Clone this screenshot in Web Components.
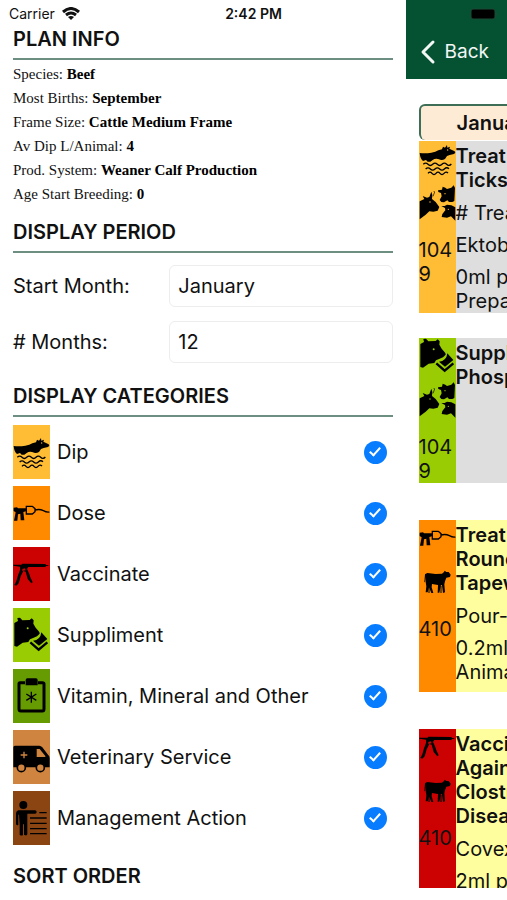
<!DOCTYPE html>
<html lang="en">
<head>
<meta charset="utf-8">
<meta name="viewport" content="width=device-width, initial-scale=1">
<title>Herd plan</title>
<style>
    html, body {
        height: 100%;
        margin: 0; }
    body {
        background: #fff;
        color: #111;
        font-family: Inter, "Liberation Sans", sans-serif;
        font-size: 20px;
        line-height: 24px; }
</style>
</head>
<body>

<template id="app-template">
    <style>
        :host {
            display: block;
            position: relative;
            height: 100%;
            overflow: hidden; }
        .panes {
            display: grid;
            grid-template-columns: 4fr 1fr;
            box-sizing: border-box;
            height: 100%;
            padding-bottom: 12px; }
        .pane {
            min-width: 0;
            min-height: 0;
            overflow: hidden; }
        .drawer {
            padding: 27px 13px 0; }
    </style>
    <div class="panes">
        <div class="pane drawer"><slot name="drawer"></slot></div>
        <div class="pane"><slot name="screen"></slot></div>
    </div>
    <slot name="status"></slot>
</template>

<template id="status-template">
    <style>
        :host {
            position: absolute;
            top: 0;
            left: 0;
            right: 0;
            display: grid;
            grid-template-columns: 1fr auto 1fr;
            align-items: center;
            height: 27px;
            padding: 0 9px;
            font-size: 14px;
            line-height: 27px; }
        .carrier {
            display: flex;
            align-items: center;
            gap: 7px; }
        .time {
            font-weight: 600; }
        .battery {
            justify-self: end; }
        svg {
            display: block; }
    </style>
    <div class="carrier">
        <slot name="carrier"></slot>
        <svg width="18" height="14" viewBox="0 0 18 14" fill="none" stroke="#111" stroke-width="3">
            <path d="M1 5Q9-2 17 5M4 8Q9 4 14 8"/>
            <path d="M6 10Q9 8 12 10L9 13Z" fill="#111" stroke="none"/>
        </svg>
    </div>
    <div class="time"><slot name="time"></slot></div>
    <svg class="battery" width="28" height="12" viewBox="0 0 28 12">
        <rect x="1" y="1" width="24" height="10" rx="2" fill="#000" stroke="#1b4a34"/>
        <path d="M26 4v4q2-2 0-4" fill="#1b4a34"/>
    </svg>
</template>

<template id="section-template">
    <style>
        :host {
            display: block;
            margin-bottom: 19px; }
        :host([dense]) {
            margin-bottom: 14px; }
        h2 {
            margin: 0 0 8px;
            padding-bottom: 7px;
            border-bottom: 2px solid #6d8f81;
            font-size: 20px;
            line-height: 24px;
            font-weight: 600; }
        :host([dense]) h2 {
            margin-bottom: 2px; }
    </style>
    <h2></h2>
    <slot></slot>
</template>

<template id="info-template">
    <style>
        :host {
            display: block;
            font-family: "Liberation Serif", serif;
            font-size: 15px;
            line-height: 24px; }
        b {
            color: #000; }
    </style>
    <span></span> <b><slot></slot></b>
</template>

<template id="field-template">
    <style>
        :host {
            display: grid;
            grid-template-columns: 7fr 10fr;
            align-items: center;
            margin: 12px 0 10px;
            padding-bottom: 2px; }
        input {
            box-sizing: border-box;
            width: 100%;
            height: 42px;
            padding: 0 8px;
            border: 1px solid #ededed;
            border-radius: 6px;
            background: #fff;
            color: inherit;
            font: inherit; }
    </style>
    <label for="value"></label>
    <input id="value" type="text">
</template>

<template id="category-template">
    <style>
        :host {
            display: flex;
            align-items: center;
            gap: 7px;
            margin-bottom: 7px;
            padding-right: 6px; }
        .tile {
            display: flex;
            align-items: center;
            width: 37px;
            height: 54px;
            background: var(--tile); }
        label {
            flex: 1; }
        input {
            appearance: none;
            display: grid;
            place-items: center;
            width: 23px;
            height: 23px;
            margin: 0;
            border-radius: 50%; }
        input:checked {
            background: #087cff; }
        input:checked::after {
            content: "";
            width: 4px;
            height: 9px;
            margin-bottom: 3px;
            border: solid #fff;
            border-width: 0 2px 2px 0;
            transform: rotate(42deg); }
    </style>
    <div class="tile"><farm-icon></farm-icon></div>
    <label for="on"><slot></slot></label>
    <input id="on" type="checkbox" checked>
</template>

<template id="nav-template">
    <style>
        :host {
            display: flex;
            align-items: flex-end;
            box-sizing: border-box;
            height: 79px;
            padding: 0 14px 14px;
            background: #055233;
            font-size: 19px; }
        button {
            display: flex;
            align-items: center;
            gap: 9px;
            padding: 0;
            border: 0;
            background: none;
            color: #f3f7f5;
            font: inherit; }
    </style>
    <button type="button">
        <svg width="16" height="26" viewBox="0 0 16 26" fill="none" stroke="#f3f7f5" stroke-width="3" stroke-linecap="round" stroke-linejoin="round"><path d="M13 3L3 13L13 23"/></svg>
        <slot></slot>
    </button>
</template>

<template id="month-template">
    <style>
        :host {
            display: block;
            width: 100vw;
            padding: 25px 13px 12px;
            box-sizing: border-box; }
        h3 {
            box-sizing: border-box;
            height: 36px;
            margin: 0 0 1px;
            padding: 3px 36px;
            border: 2px solid #3f6e57;
            border-bottom: 0;
            border-radius: 6px;
            background: #fdebd5;
            font-size: 20px;
            line-height: 28px;
            font-weight: 600; }
        .events {
            display: flex;
            flex-direction: column;
            gap: 25px; }
    </style>
    <h3></h3>
    <div class="events"><slot></slot></div>
</template>

<template id="event-template">
    <style>
        :host {
            display: grid;
            grid-template-columns: 37px 1fr;
            background: var(--body);
            white-space: nowrap; }
        .stripe {
            background: var(--stripe); }
        farm-icon {
            margin-bottom: 7px; }
        .count {
            padding: 9px 0 0;
            white-space: normal;
            word-break: break-all; }
        .text {
            display: flex;
            flex-direction: column;
            gap: 8px;
            padding: 3px 0 0; }
        :host([roomy]) .text {
            padding-bottom: 8px; }
        ::slotted(strong) {
            margin-bottom: 1px;
            font-weight: 600; }
    </style>
    <div class="stripe">
        <farm-icon class="kind"></farm-icon>
        <farm-icon class="herd"></farm-icon>
        <div class="count"></div>
    </div>
    <div class="text"><slot></slot></div>
</template>

<plan-app>
    <status-bar slot="status">
        <span slot="carrier">Carrier</span>
        <span slot="time">2:42 PM</span>
    </status-bar>

    <div slot="drawer">
        <drawer-section heading="PLAN INFO" dense>
            <info-line label="Species:">Beef</info-line>
            <info-line label="Most Births:">September</info-line>
            <info-line label="Frame Size:">Cattle Medium Frame</info-line>
            <info-line label="Av Dip L/Animal:">4</info-line>
            <info-line label="Prod. System:">Weaner Calf Production</info-line>
            <info-line label="Age Start Breeding:">0</info-line>
        </drawer-section>
        <drawer-section heading="DISPLAY PERIOD">
            <text-field label="Start Month:" value="January"></text-field>
            <text-field label="# Months:" value="12"></text-field>
        </drawer-section>
        <drawer-section heading="DISPLAY CATEGORIES">
            <category-row icon="dip" color="#ffbd35">Dip</category-row>
            <category-row icon="dose" color="#ff8a00">Dose</category-row>
            <category-row icon="vaccinate" color="#cc0202">Vaccinate</category-row>
            <category-row icon="feed" color="#99cc02">Suppliment</category-row>
            <category-row icon="vitamin" color="#669b02">Vitamin, Mineral and Other</category-row>
            <category-row icon="van" color="#cf853f">Veterinary Service</category-row>
            <category-row icon="manage" color="#8b4513">Management Action</category-row>
        </drawer-section>
        <drawer-section heading="SORT ORDER"></drawer-section>
    </div>

    <div slot="screen">
        <nav-header>Back</nav-header>
        <month-group heading="January">
            <plan-event icon="dip" herd="cattle" count="1049" stripe="#ffbd35" body="#dedede">
                <strong>Treat<br>Ticks</strong>
                <span># Treatments</span>
                <span>Ektoban</span>
                <span>0ml per<br>Prepared</span>
            </plan-event>
            <plan-event icon="feed" herd="cattle" count="1049" stripe="#99cc02" body="#dedede">
                <strong>Supplement<br>Phosphate</strong>
            </plan-event>
        </month-group>
        <month-group>
            <plan-event icon="dose" herd="calf" count="410" stripe="#ff8a00" body="#fffe9f" roomy>
                <strong>Treat<br>Roundworm<br>Tapeworm</strong>
                <span>Pour-on</span>
                <span>0.2ml<br>Animal</span>
            </plan-event>
        </month-group>
        <month-group>
            <plan-event icon="vaccinate" herd="calf" count="410" stripe="#cc0202" body="#fffe9f">
                <strong>Vaccinate<br>Against<br>Clostridial<br>Diseases</strong>
                <span>Covexin</span>
                <span>2ml per<br>Animal</span>
            </plan-event>
        </month-group>
    </div>
</plan-app>

<script>
    // every icon is drawn on a 111 x 111 grid
    const ICONS = {
        dip: `<path d="M2 36Q20 38 37 35Q50 33 58 28L69 25L72 17L78 20L84 12L85 20L93 17L91 23L107 31L109 35L105 39L92 42L84 45L78 54Q70 58 64 56L57 54Q49 51 41 57L34 62L26 62L21 57L12 60Q4 55 2 36Z"/>
            <circle cx="86" cy="27" r="2" fill="var(--hole)"/>
            <g fill="none" stroke="#000" stroke-width="4">
                <path d="M13 70q7-7 14 0t14 0t14 0t14 0t14 0t14-1"/>
                <path d="M20 84q7-7 14 0t14 0t14 0t14 0t14-1"/>
                <path d="M27 97q6-7 12 0t12 0t12 0t12 0t12-1"/>
            </g>`,
        dose: `<path d="M2 38L12 37L15 40L39 40L39 49L31 51L34 76L23 76L22 56L15 58L13 77L3 77L8 52L2 48Z"/>
            <path d="M40 34H58L66 41V50L58 57H40ZM66 45Q80 41 91 47T109 51" fill="none" stroke="#000" stroke-width="4"/>`,
        vaccinate: `<path d="M1 26L25 26L28 23L98 24L98 27L106 27L106 29L98 30L98 33L46 33L42 39L48 52L52 64L59 79L55 82L44 69L38 47L31 45L23 61L17 82L10 89L4 87L10 76L15 58L21 42L21 32L1 29Z"/>
            <path d="M28 39L35 37L38 43L28 45Z" fill="var(--hole)"/>`,
        feed: `<path d="M4 18L15 12L13 3L21 2L28 10L50 9L56 4L62 10L61 20L68 32L79 45L80 50L72 58L62 62L51 67L46 75L29 77L12 89L4 87Z"/>
            <path d="M52 76L77 98L103 76" fill="none" stroke="#000" stroke-width="7"/>
            <path d="M85 46L103 66L78 86L60 71Q82 70 85 46Z"/>
            <circle cx="44" cy="34" r="3" fill="var(--hole)"/>
            <path d="M64 66Q80 64 81 52" fill="none" stroke="var(--hole)" stroke-width="2"/>`,
        vitamin: `<path d="M36 14H21Q18 14 18 17V93Q18 99 24 99H88Q93 99 93 93V17Q93 14 88 14H75" fill="none" stroke="#000" stroke-width="9"/>
            <path d="M38 6Q38 1 43 1H69Q74 1 74 6V22H38Z"/>
            <path d="M55 41V74M40 48L70 67M70 48L40 67" stroke="#000" stroke-width="4"/>`,
        van: `<path d="M1 25Q1 20 6 20H79Q84 20 88 25L105 47Q110 51 110 57V85H1Z"/>
            <path d="M71 30H80L97 51V54H71Z" fill="var(--hole)"/>
            <path d="M33 38V58M23 48H43" stroke="var(--hole)" stroke-width="4"/>
            <g fill="var(--hole)" stroke="#000" stroke-width="5"><circle cx="25" cy="86" r="12"/><circle cx="82" cy="86" r="12"/></g>`,
        manage: `<circle cx="31" cy="15" r="12"/>
            <path d="M16 31H66Q71 31 71 36Q71 41 66 41H43V103Q42 107 37 106L33 104V73H30V105Q25 109 20 104V75L18 43L16 46V75Q10 78 9 71V40Q10 32 16 31Z"/>
            <path d="M79 38H101M51 54H101M51 70H101M51 86H101M51 101H101" stroke="#000" stroke-width="4"/>`,
        cattle: `<path d="M2 49L16 42L11 33L24 38L31 36L37 20L40 30L39 42L50 51L61 66L56 77L43 80L31 79L20 89L2 103Z"/>
            <path d="M42 34L47 21L44 18" fill="none" stroke="#000" stroke-width="2"/>
            <path d="M57 16L69 14L71 5L79 8L84 12L97 8L104 1L108 9L106 48L100 51L90 51L85 46L75 52L67 51L62 45L68 34L66 24L58 21Z"/>
            <path d="M67 63L77 63L84 59L97 61L109 67V107L96 94L84 98L68 96L70 87L79 76L78 69Z"/>
            <g fill="var(--hole)"><circle cx="33" cy="51" r="2"/><circle cx="78" cy="26" r="2"/><circle cx="88" cy="73" r="2"/></g>`,
        calf: `<path d="M18 31L25 27L50 30L69 29L75 24L77 20L82 24L89 24L95 32L93 39L82 41L78 52L76 61L78 85L72 87L69 64L66 63L61 86H56L57 63L39 60L38 70L43 87H37L30 70L26 85H20L22 67L20 54L21 39L18 55L16 54Z"/>
            <path d="M30 87L30 69M66 87L66 66" stroke="#000" stroke-width="3"/>`
    };

    class TemplateElement extends HTMLElement {
        constructor(id) {
            super();
            this.attachShadow({mode: 'open'});
            this.shadowRoot.appendChild(document.importNode(document.getElementById(id).content, true));
        }

        $(selector) {
            return this.shadowRoot.querySelector(selector);
        }
    }

    class FarmIcon extends HTMLElement {
        static get observedAttributes() {
            return ['name'];
        }

        constructor() {
            super();
            this.attachShadow({mode: 'open'});
        }

        attributeChangedCallback(name, oldValue, newValue) {
            this.shadowRoot.innerHTML = `
                <style>
                    :host { display: block; width: 37px; height: 37px; }
                    svg { display: block; width: 100%; height: 100%; }
                </style>
                <svg viewBox="0 0 111 111" aria-hidden="true">${ICONS[newValue] || ''}</svg>`;
        }
    }
    customElements.define('farm-icon', FarmIcon);

    class PlanApp extends TemplateElement {
        constructor() {
            super('app-template');
        }
    }
    customElements.define('plan-app', PlanApp);

    class StatusBar extends TemplateElement {
        constructor() {
            super('status-template');
        }
    }
    customElements.define('status-bar', StatusBar);

    class DrawerSection extends TemplateElement {
        constructor() {
            super('section-template');
            this.$('h2').textContent = this.getAttribute('heading');
        }
    }
    customElements.define('drawer-section', DrawerSection);

    class InfoLine extends TemplateElement {
        constructor() {
            super('info-template');
            this.$('span').textContent = this.getAttribute('label');
        }
    }
    customElements.define('info-line', InfoLine);

    class TextField extends TemplateElement {
        constructor() {
            super('field-template');
            this.$('label').textContent = this.getAttribute('label');
            this.$('input').value = this.getAttribute('value');
        }
    }
    customElements.define('text-field', TextField);

    class CategoryRow extends TemplateElement {
        constructor() {
            super('category-template');
            let color = this.getAttribute('color');
            this.style.setProperty('--tile', color);
            this.style.setProperty('--hole', color);
            this.$('farm-icon').setAttribute('name', this.getAttribute('icon'));
        }
    }
    customElements.define('category-row', CategoryRow);

    class NavHeader extends TemplateElement {
        constructor() {
            super('nav-template');
        }
    }
    customElements.define('nav-header', NavHeader);

    class MonthGroup extends TemplateElement {
        constructor() {
            super('month-template');
            let heading = this.getAttribute('heading');
            if (heading) {
                this.$('h3').textContent = heading;
            } else {
                this.$('h3').remove();
            }
        }
    }
    customElements.define('month-group', MonthGroup);

    class PlanEvent extends TemplateElement {
        constructor() {
            super('event-template');
            let stripe = this.getAttribute('stripe');
            this.style.setProperty('--stripe', stripe);
            this.style.setProperty('--hole', stripe);
            this.style.setProperty('--body', this.getAttribute('body'));
            this.$('.kind').setAttribute('name', this.getAttribute('icon'));
            this.$('.herd').setAttribute('name', this.getAttribute('herd'));
            this.$('.count').textContent = this.getAttribute('count');
        }
    }
    customElements.define('plan-event', PlanEvent);
</script>
</body>
</html>
